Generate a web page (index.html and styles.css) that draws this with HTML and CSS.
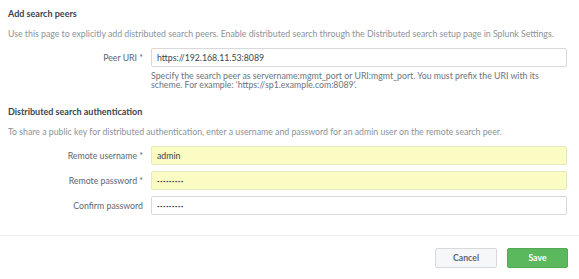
FILE: index.html
```html
<!DOCTYPE html>
<html lang="en">
<head>
  <meta charset="UTF-8">
  <title>Add search peers</title>
  <link rel="stylesheet" href="styles.css">
</head>
<body>
  <form class="peer-form">
    <section class="section">
      <h2>Add search peers</h2>
      <p class="intro">Use this page to explicitly add distributed search peers. Enable distributed search through the Distributed search setup page in Splunk Settings.</p>
      <div class="row">
        <label class="label">Peer URI *</label>
        <div class="control">
          <input class="field" type="text" value="https://192.168.11.53:8089">
          <p class="help">Specify the search peer as servername:mgmt_port or URI:mgmt_port. You must prefix the URI with its scheme. For example: 'https://sp1.example.com:8089'.</p>
        </div>
      </div>
    </section>
    <section class="section">
      <h2>Distributed search authentication</h2>
      <p class="intro">To share a public key for distributed authentication, enter a username and password for an admin user on the remote search peer.</p>
      <div class="row">
        <label class="label">Remote username *</label>
        <div class="control"><input class="field filled" type="text" value="admin"></div>
      </div>
      <div class="row">
        <label class="label">Remote password *</label>
        <div class="control"><input class="field filled secret" type="password" value="password1"></div>
      </div>
      <div class="row">
        <label class="label">Confirm password</label>
        <div class="control"><input class="field secret" type="password" value="password1"></div>
      </div>
    </section>
    <footer class="actions">
      <button type="button" class="btn">Cancel</button>
      <button type="button" class="btn primary">Save</button>
    </footer>
  </form>
</body>
</html>
```

FILE: styles.css
```css
* {
  box-sizing: border-box;
}
body {
  margin: 0;
  background: #fff;
  font-family: Lato, "Open Sans", sans-serif;
  font-size: 8.75px;
  line-height: 10px;
  color: #3c444d;
}
.section {
  padding: 0 12px 0 8px;
}
.section + .section {
  margin-top: 9px;
}
h2 {
  margin: 0;
  padding-top: 9px;
  font-size: 9px;
  line-height: 10px;
  font-weight: bold;
  color: #3c444d;
}
.intro {
  margin: 10px 0 0;
  color: #8a939c;
}
.row {
  display: flex;
  margin-top: 6px;
}
.intro + .row {
  margin-top: 9px;
}
.label {
  width: 135px;
  padding-top: 5px;
  text-align: right;
  color: #5c6773;
}
.control {
  margin-left: 8px;
  flex: 1;
}
.field {
  display: block;
  width: 416px;
  height: 19px;
  padding: 0 5px;
  border: 1px solid #d7d9dc;
  border-radius: 2px;
  font: inherit;
  color: #3c444d;
  background: #fff;
}
.field.filled {
  background: #fafcc3;
  border-color: #e6e8c0;
}
.field.secret {
  font-size: 4.6px;
  letter-spacing: 0.3px;
}
.help {
  margin: 4px 0 0;
  color: #6b7580;
  line-height: 9px;
}
.actions {
  margin-top: 20px;
  border-top: 1px solid #eceeef;
  padding: 12px 11px 0 0;
  display: flex;
  justify-content: flex-end;
  gap: 10px;
}
.btn {
  width: 62px;
  height: 20px;
  border: 1px solid #d7d9dc;
  border-radius: 2px;
  background: #f6f7f8;
  font: inherit;
  font-weight: bold;
  color: #5c6773;
}
.btn.primary {
  width: 61px;
  border-color: #53a955;
  background: #5cb85c;
  color: #fff;
}
```
